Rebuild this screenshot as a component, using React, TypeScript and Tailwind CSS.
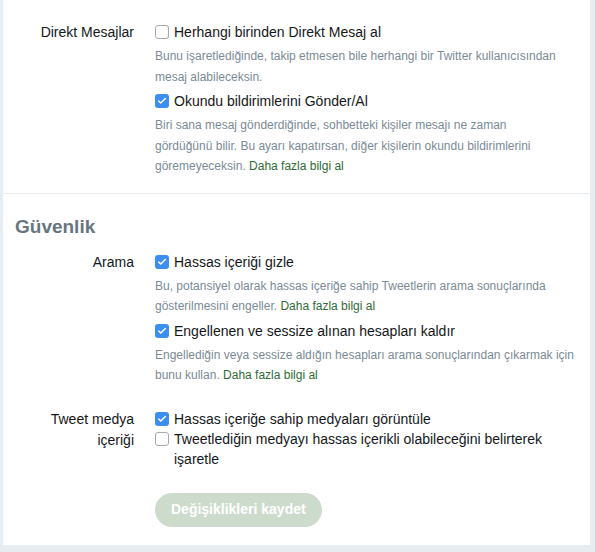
import type { ReactNode } from "react";
import { Check } from "lucide-react";

type Opt = { label: string; checked: boolean; help?: ReactNode; more?: boolean };

const Box = ({ checked }: { checked: boolean }) =>
  checked ? (
    <span className="mt-[3px] flex h-[14px] w-[14px] shrink-0 items-center justify-center rounded-[3px] bg-[#3b8ff0]">
      <Check className="h-[10px] w-[10px] text-white" strokeWidth={3.5} />
    </span>
  ) : (
    <span className="mt-[3px] h-[14px] w-[14px] shrink-0 rounded-[3px] border border-[#a9a9a9] bg-white" />
  );

const Option = ({ o }: { o: Opt }) => (
  <div>
    <label className="flex gap-[5px] text-[14px] leading-[20px] text-[#14171a]">
      <Box checked={o.checked} />
      <span>{o.label}</span>
    </label>
    {o.help && (
      <p className="my-[4px] text-[12px] leading-[20.5px] text-[#7b8a96]">
        {o.help}
        {o.more && <span className="text-[#2e6b36]"> Daha fazla bilgi al</span>}
      </p>
    )}
  </div>
);

const Row = ({ label, options }: { label: string; options: Opt[] }) => (
  <div className="grid grid-cols-[120px_1fr] gap-x-[21px]">
    <div className="text-right text-[14px] leading-[21px] text-[#14171a]">{label}</div>
    <div className="flex w-[422px] flex-col">
      {options.map((o) => (
        <Option key={o.label} o={o} />
      ))}
    </div>
  </div>
);

export default function App() {
  return (
    <div className="min-h-[552px] bg-[#e6ecf0] pb-[7px] pl-[3px] pr-[5px] font-['Liberation_Sans',Arial,sans-serif]">
      <div className="bg-white">
        {/* Direkt mesajlar */}
        <div className="border-b border-[#e6ecf0] pb-[12px] pl-[11px] pt-[22px]">
          <Row
            label="Direkt Mesajlar"
            options={[
              {
                label: "Herhangi birinden Direkt Mesaj al",
                checked: false,
                help: "Bunu işaretlediğinde, takip etmesen bile herhangi bir Twitter kullanıcısından mesaj alabileceksin.",
              },
              {
                label: "Okundu bildirimlerini Gönder/Al",
                checked: true,
                help: (
                  <>
                    Biri sana mesaj gönderdiğinde, sohbetteki kişiler mesajı ne zaman
                    <br />
                    gördüğünü bilir. Bu ayarı kapatırsan, diğer kişilerin okundu bildirimlerini göremeyeceksin.
                  </>
                ),
                more: true,
              },
            ]}
          />
        </div>

        {/* Güvenlik */}
        <div className="pb-[18px] pl-[11px] pt-[21px]">
          <h2 className="mb-[13px] pl-[1px] text-[19px] font-bold leading-[24px] text-[#66757f]">Güvenlik</h2>
          <Row
            label="Arama"
            options={[
              {
                label: "Hassas içeriği gizle",
                checked: true,
                help: "Bu, potansiyel olarak hassas içeriğe sahip Tweetlerin arama sonuçlarında gösterilmesini engeller.",
                more: true,
              },
              {
                label: "Engellenen ve sessize alınan hesapları kaldır",
                checked: true,
                help: "Engellediğin veya sessize aldığın hesapları arama sonuçlarından çıkarmak için bunu kullan.",
                more: true,
              },
            ]}
          />
          <div className="mt-[19px]">
            <Row
              label="Tweet medya içeriği"
              options={[
                { label: "Hassas içeriğe sahip medyaları görüntüle", checked: true },
                {
                  label: "Tweetlediğin medyayı hassas içerikli olabileceğini belirterek işaretle",
                  checked: false,
                },
              ]}
            />
          </div>
          <div className="mt-[24px] pl-[141px]">
            <button
              disabled
              className="h-[34px] rounded-full bg-[#cddbcd] px-[16px] text-[14px] font-bold text-white"
            >
              Değişiklikleri kaydet
            </button>
          </div>
        </div>
      </div>
    </div>
  );
}
